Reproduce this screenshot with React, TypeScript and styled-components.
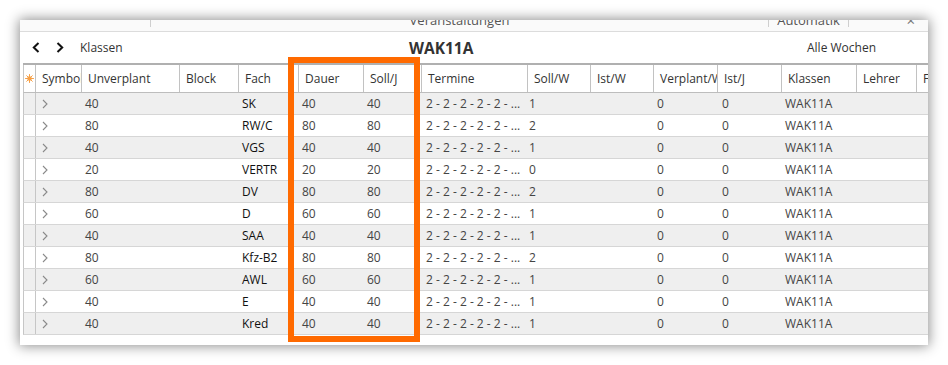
import React from 'react';
import styled, { createGlobalStyle } from 'styled-components';

const GlobalStyle = createGlobalStyle`
  html, body {
    margin: 0;
    padding: 0;
    background: #ffffff;
  }
  body {
    font-family: "Open Sans", "Noto Sans", sans-serif;
    font-size: 12px;
    color: #333;
  }
`;

// column widths, each one includes its 1px right border
const COLS = '12px 46px 98px 59px 60px 65px 58px 106px 63px 63px 64px 64px 75px 60px 80px';

const Page = styled.div`
  width: 948px;
  height: 365px;
  padding: 20px;
  box-sizing: border-box;
  overflow: hidden;
`;

const Window = styled.div`
  position: relative;
  width: 908px;
  height: 325px;
  background: #fff;
  box-shadow: 0 0 12px 1px rgba(0, 0, 0, 0.45);
  display: flex;
  flex-direction: column;
  overflow: hidden;
`;

const TitleBar = styled.div`
  display: flex;
  height: 11px;
  flex-shrink: 0;
  background: #fafafa;
  border-bottom: 1px solid #dcdcdc;
  overflow: hidden;
`;

const TitleSeg = styled.div<{ $w?: number; $align?: string }>`
  ${({ $w }) => ($w ? `width: ${$w}px; flex-shrink: 0;` : 'flex: 1;')}
  display: flex;
  justify-content: ${({ $align }) => $align || 'center'};
  font-size: 13px;
  line-height: 16px;
  margin-top: -8px;
  color: #555;
  white-space: nowrap;
`;

const TitleSep = styled.div`
  width: 1px;
  height: 7px;
  flex-shrink: 0;
  background: #cfcfcf;
`;

const CloseGlyph = styled.span`
  font-size: 15px;
  color: #777;
  padding-right: 13px;
`;

const NavBar = styled.div`
  display: flex;
  align-items: center;
  height: 31px;
  flex-shrink: 0;
  padding: 0 52px 0 12px;
`;

const NavLeft = styled.div`
  width: 377px;
  display: flex;
  align-items: center;
  flex-shrink: 0;
`;

const NavButton = styled.button`
  border: 0;
  background: none;
  padding: 0;
  margin-right: 16px;
  display: flex;
  align-items: center;
  cursor: pointer;
`;

const NavLabel = styled.span`
  font-size: 12px;
  color: #333;
`;

const NavTitle = styled.div`
  font-size: 15.5px;
  font-weight: 700;
  color: #333;
`;

const NavRight = styled.div`
  margin-left: auto;
  font-size: 12px;
  color: #333;
`;

const Grid = styled.div`
  margin-left: 3px;
  border-top: 2px solid #b0b0b0;
`;

const HeadRow = styled.div`
  display: grid;
  grid-template-columns: ${COLS};
  height: 27px;
  border-left: 1px solid #c6c6c6;
  border-bottom: 1px solid #bdbdbd;
  background: #fff;
`;

const HeadCell = styled.div`
  display: flex;
  align-items: center;
  padding: 0 5px 0 6px;
  border-right: 1px solid #c2c2c2;
  overflow: hidden;
  white-space: nowrap;
  color: #333;
`;

const StarCell = styled.div`
  display: flex;
  align-items: center;
  justify-content: center;
  border-right: 1px solid #c2c2c2;
`;

const Row = styled.div<{ $alt: boolean }>`
  display: grid;
  grid-template-columns: ${COLS};
  height: 21px;
  border-left: 1px solid #c6c6c6;
  border-bottom: 1px solid #d6d6d6;
  background: ${({ $alt }) => ($alt ? '#efefef' : '#ffffff')};
`;

const Cell = styled.div<{ $dark?: boolean; $pad?: number }>`
  display: flex;
  align-items: center;
  padding-left: ${({ $pad }) => ($pad ?? 3)}px;
  overflow: hidden;
  white-space: nowrap;
  color: ${({ $dark }) => ($dark ? '#111' : '#444')};
`;

const RowGutter = styled.div`
  border-right: 1px solid #c6c6c6;
`;

const Highlight = styled.div`
  position: absolute;
  left: 268px;
  top: 37px;
  width: 132px;
  height: 285px;
  box-sizing: border-box;
  border: 6px solid #ff6a00;
  pointer-events: none;
`;

const Chevron = ({ dir }: { dir: 'left' | 'right' }) => (
  <svg width="8" height="11" viewBox="0 0 8 11">
    <polyline
      points={dir === 'left' ? '6.5,1 1.8,5.5 6.5,10' : '1.5,1 6.2,5.5 1.5,10'}
      fill="none"
      stroke="#111"
      strokeWidth="2"
    />
  </svg>
);

const Expander = () => (
  <svg width="6" height="10" viewBox="0 0 6 10">
    <polyline points="1,1 5,5 1,9" fill="none" stroke="#8a8a8a" strokeWidth="1.1" />
  </svg>
);

const NewRowStar = () => (
  <svg width="9" height="9" viewBox="0 0 9 9">
    <g stroke="#f7a046" strokeWidth="1" strokeLinecap="round">
      <line x1="4.5" y1="0.5" x2="4.5" y2="8.5" />
      <line x1="0.5" y1="4.5" x2="8.5" y2="4.5" />
      <line x1="1.7" y1="1.7" x2="7.3" y2="7.3" />
      <line x1="7.3" y1="1.7" x2="1.7" y2="7.3" />
    </g>
    <circle cx="4.5" cy="4.5" r="2.3" fill="#f7a046" />
  </svg>
);

const headers = [
  'Symbol', 'Unverplant', 'Block', 'Fach', 'Dauer', 'Soll/J', 'Termine',
  'Soll/W', 'Ist/W', 'Verplant/W', 'Ist/J', 'Klassen', 'Lehrer', 'Fachraum',
];

type Lesson = {
  unverplant: string;
  fach: string;
  dauer: string;
  sollJ: string;
  sollW: string;
};

const lessons: Lesson[] = [
  { unverplant: '40', fach: 'SK', dauer: '40', sollJ: '40', sollW: '1' },
  { unverplant: '80', fach: 'RW/C', dauer: '80', sollJ: '80', sollW: '2' },
  { unverplant: '40', fach: 'VGS', dauer: '40', sollJ: '40', sollW: '1' },
  { unverplant: '20', fach: 'VERTR', dauer: '20', sollJ: '20', sollW: '0' },
  { unverplant: '80', fach: 'DV', dauer: '80', sollJ: '80', sollW: '2' },
  { unverplant: '60', fach: 'D', dauer: '60', sollJ: '60', sollW: '1' },
  { unverplant: '40', fach: 'SAA', dauer: '40', sollJ: '40', sollW: '1' },
  { unverplant: '80', fach: 'Kfz-B2', dauer: '80', sollJ: '80', sollW: '2' },
  { unverplant: '60', fach: 'AWL', dauer: '60', sollJ: '60', sollW: '1' },
  { unverplant: '40', fach: 'E', dauer: '40', sollJ: '40', sollW: '1' },
  { unverplant: '40', fach: 'Kred', dauer: '40', sollJ: '40', sollW: '1' },
];

const App: React.FC = () => {
  return (
    <Page>
      <GlobalStyle />
      <Window>
        <TitleBar>
          <TitleSeg $w={130} />
          <TitleSep />
          <TitleSeg $w={617}>Veranstaltungen</TitleSeg>
          <TitleSep />
          <TitleSeg $w={79}>Automatik</TitleSeg>
          <TitleSep />
          <TitleSeg $align="flex-end">
            <CloseGlyph>×</CloseGlyph>
          </TitleSeg>
        </TitleBar>

        <NavBar>
          <NavLeft>
            <NavButton>
              <Chevron dir="left" />
            </NavButton>
            <NavButton>
              <Chevron dir="right" />
            </NavButton>
            <NavLabel>Klassen</NavLabel>
          </NavLeft>
          <NavTitle>WAK11A</NavTitle>
          <NavRight>Alle Wochen</NavRight>
        </NavBar>

        <Grid>
          <HeadRow>
            <StarCell>
              <NewRowStar />
            </StarCell>
            {headers.map((h, i) => (
              <HeadCell key={`head-${i}`}>{h}</HeadCell>
            ))}
          </HeadRow>
          {lessons.map((l, i) => (
            <Row key={`row-${i}`} $alt={i % 2 === 0}>
              <RowGutter />
              <Cell $pad={6}>
                <Expander />
              </Cell>
              <Cell>{l.unverplant}</Cell>
              <Cell />
              <Cell $dark>{l.fach}</Cell>
              <Cell>{l.dauer}</Cell>
              <Cell>{l.sollJ}</Cell>
              <Cell $pad={4}>2 - 2 - 2 - 2 - 2 - ...</Cell>
              <Cell $pad={1}>{l.sollW}</Cell>
              <Cell />
              <Cell>0</Cell>
              <Cell $pad={4}>0</Cell>
              <Cell>WAK11A</Cell>
              <Cell />
              <Cell />
            </Row>
          ))}
        </Grid>

        <Highlight />
      </Window>
    </Page>
  );
};

export default App;
